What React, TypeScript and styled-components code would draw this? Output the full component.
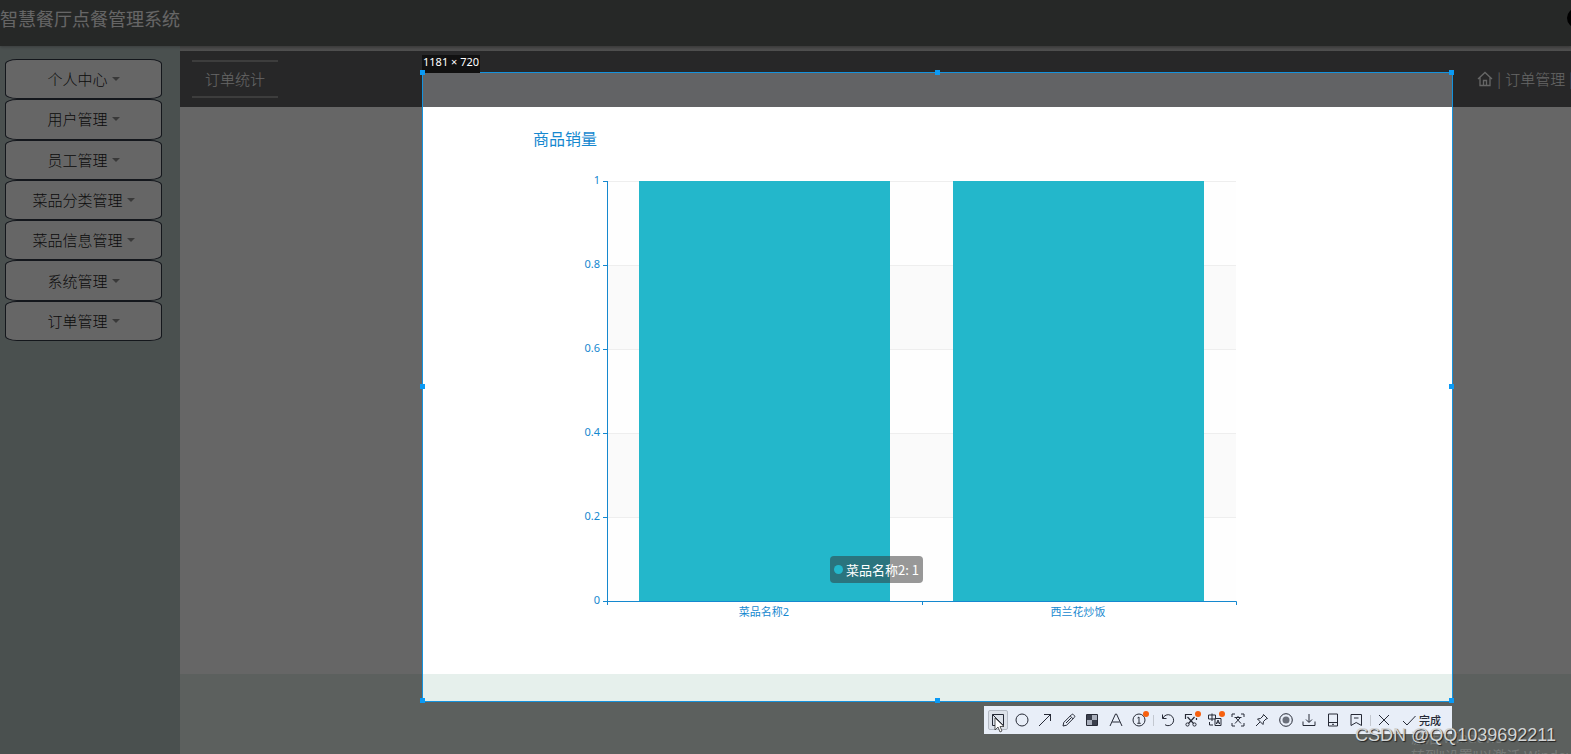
import React from "react";
import styled, { createGlobalStyle } from "styled-components";

const sans = `"Noto Sans", "Noto Sans CJK SC", sans-serif`;
const cjk = `"Noto Sans CJK SC", sans-serif`;
const blue = "#1588cf";

const Global = createGlobalStyle`
  * { box-sizing: border-box; }
  body { margin: 0; overflow: hidden; font-family: ${cjk}; background: #e6f0ec; }
`;

const Screen = styled.div`
  position: relative;
  min-height: 100vh;
  display: flex;
  flex-direction: column;
  overflow: hidden;
`;

const Header = styled.header`
  height: 46px;
  padding-bottom: 10px;
  display: flex;
  align-items: center;
  justify-content: space-between;
  background: #5f6462;
  box-shadow: 0 1px 3px #60646480;
  z-index: 1;
`;

const SystemName = styled.h1`
  margin: 0;
  font-size: 18px;
  line-height: 24px;
  font-weight: 400;
  color: #fff;
`;

const Avatar = styled.span`
  width: 20px;
  height: 20px;
  margin-right: -16px;
  border-radius: 50%;
  background: #000;
`;

const Body = styled.div`
  flex: 1;
  display: flex;
`;

const Sidebar = styled.nav`
  width: 180px;
  flex: none;
  padding: 13px 18px 0 5px;
  background: #b9c8c6;
`;

const Menu = styled.ul`
  margin: 0;
  padding: 0;
  list-style: none;
  height: 282px;
  display: grid;
  grid-auto-rows: 1fr;
`;

const MenuItem = styled.li`
  display: flex;
`;

const MenuButton = styled.button`
  flex: 1;
  padding: 0;
  display: flex;
  align-items: center;
  justify-content: center;
  gap: 4px;
  border: 1px solid #343a48;
  border-radius: 12px / 5px;
  background: #fff;
  font: 300 15px/20px ${cjk};
  color: #222;
`;

const Caret = styled.span`
  border: 4px solid transparent;
  border-top-color: #909090;
  border-bottom: 0;
`;

const Main = styled.main`
  flex: 1;
  min-width: 0;
  padding-top: 5px;
  background: linear-gradient(#b0b0b0, #c8c8c8) 0 0 / 100% 5px no-repeat;
`;

const TitleBar = styled.div`
  height: 56px;
  padding-left: 12px;
  display: flex;
  align-items: center;
  justify-content: space-between;
  background: #626365;
  color: #fff;
  font-size: 15px;
  line-height: 20px;
  font-weight: 300;
  white-space: nowrap;
  overflow: hidden;
`;

const PageTitle = styled.h2`
  margin: 0;
  padding: 7px 13px;
  border: solid #999;
  border-width: 2px 0;
  font-size: 15px;
  line-height: 20px;
  font-weight: 300;
`;

const Crumbs = styled.div`
  display: flex;
  align-items: center;
  gap: 4px;
  margin-right: -2px;
`;

const CrumbLink = styled.a`
  display: flex;
  color: inherit;
  text-decoration: none;
`;

const Content = styled.section`
  height: 567px;
  padding-left: 348px;
  background: #fff;
`;

const ChartBox = styled.div`
  position: relative;
  width: 788px;
`;

const ChartArt = styled.svg`
  display: block;
`;

const Tooltip = styled.div`
  position: absolute;
  left: 302px;
  top: 449px;
  height: 27px;
  padding: 0 4px;
  display: flex;
  align-items: center;
  gap: 3px;
  border-radius: 4px;
  background: rgba(50, 50, 50, 0.5);
  color: #fff;
  font: 400 13px/20px ${cjk};
  white-space: nowrap;
`;

const Dot = styled.span`
  width: 9px;
  height: 9px;
  border-radius: 50%;
  background: #23b7cb;
`;

const Selection = styled.div`
  position: absolute;
  z-index: 2;
  left: 422px;
  right: 118px;
  top: 72px;
  height: 630px;
  border: 1px solid #1592dc;
  box-shadow: 0 0 0 4000px rgba(0, 0, 0, 0.6);
`;

const Handle = styled.i<{ $x: number; $y: number }>`
  position: absolute;
  left: ${(p) => p.$x}%;
  top: ${(p) => p.$y}%;
  width: 5px;
  height: 5px;
  margin: -3px;
  background: #0a9af5;
`;

const SizeLabel = styled.span`
  position: absolute;
  left: -1px;
  bottom: 100%;
  height: 18px;
  padding: 0 1px;
  background: #111;
  color: #fff;
  font: 400 11px/14px ${sans};
  white-space: nowrap;
`;

const Tools = styled.div`
  position: absolute;
  right: 0;
  top: 100%;
  margin-top: 5px;
  width: 468px;
  height: 28px;
  padding: 0 11px 0 4px;
  display: flex;
  align-items: center;
  justify-content: space-between;
  background: #e8eef8;
  color: #262a36;
`;

const Tool = styled.button<{ $active?: boolean }>`
  position: relative;
  width: 20px;
  height: 20px;
  flex: none;
  padding: 0;
  display: grid;
  place-items: center;
  border: 1px solid ${(p) => (p.$active ? "#b4bac4" : "transparent")};
  border-radius: 2px;
  background: ${(p) => (p.$active ? "#dde2ea" : "none")};
  color: inherit;
`;

const Badge = styled.i`
  position: absolute;
  right: -1px;
  top: 0;
  width: 6px;
  height: 6px;
  border-radius: 50%;
  background: #f7600f;
`;

const Divider = styled.span`
  width: 1px;
  height: 11px;
  background: #c3c8d0;
`;

const Done = styled.button`
  padding: 0 0 0 4px;
  border: 0;
  display: flex;
  align-items: center;
  gap: 3px;
  background: none;
  color: inherit;
  font: 500 11px/16px ${cjk};
  white-space: nowrap;
`;

const Cursor = styled.svg`
  position: absolute;
  left: 10px;
  top: 11px;
`;

const Activation = styled.div`
  position: absolute;
  z-index: 3;
  left: calc(100% - 160px);
  top: calc(100% - 25px);
  color: #a0a4a266;
  font: 400 14px/18px ${sans};
  white-space: nowrap;
`;

const Watermark = styled.div`
  position: absolute;
  z-index: 4;
  right: 15px;
  bottom: 8px;
  color: #d2d4d4;
  font: 400 18px/22px "Liberation Sans", Arial, sans-serif;
  text-shadow: 1px 1px 1px #222;
  white-space: nowrap;
`;

const menu = ["个人中心", "用户管理", "员工管理", "菜品分类管理", "菜品信息管理", "系统管理", "订单管理"];

const handles = [
  [0, 0], [50, 0], [100, 0],
  [0, 50], [100, 50],
  [0, 100], [50, 100], [100, 100],
];

const ticks = [
  { label: "1", y: 74 },
  { label: "0.8", y: 158 },
  { label: "0.6", y: 242 },
  { label: "0.4", y: 326 },
  { label: "0.2", y: 410 },
  { label: "0", y: 494 },
];

const bars = [
  { name: "菜品名称2", x: 111, mid: 236 },
  { name: "西兰花炒饭", x: 425, mid: 550 },
];

function Chart() {
  return (
    <ChartArt width="788" height="567" role="img" aria-label="商品销量">
      <text x="5" y="38" fontSize="16" fill={blue} fontFamily={cjk}>商品销量</text>
      {ticks.slice(0, 5).map((t, i) => (
        <rect key={t.y} x="79" y={t.y} width="629" height="84" fill={i % 2 ? "#fafafa" : "#fefefe"} />
      ))}
      {ticks.slice(0, 5).map((t) => (
        <path key={t.y} d={`M79 ${t.y + 0.5}H708`} stroke="#eee" />
      ))}
      {bars.map((b) => (
        <rect key={b.name} x={b.x} y="74" width="251" height="420" fill="#23b7cb" />
      ))}
      <g stroke={blue} fill="none">
        <path d="M79.5 74V498M75 494.5H708.5V498M394.5 494V498" />
        {ticks.map((t) => <path key={t.y} d={`M75 ${t.y + 0.5}h5`} />)}
      </g>
      <g fill={blue} fontFamily={sans} fontSize="11">
        {ticks.map((t) => <text key={t.y} x="72" y={t.y + 3} textAnchor="end">{t.label}</text>)}
        {bars.map((b) => <text key={b.name} x={b.mid} y="509" textAnchor="middle">{b.name}</text>)}
      </g>
    </ChartArt>
  );
}

const icons: { name: string; badge?: boolean; active?: boolean; dividerAfter?: boolean; art: React.ReactNode }[] = [
  { name: "矩形", active: true, art: <path d="M1.500 1.500h11v11h-11zM1.500 1.500l11 11" /> },
  { name: "椭圆", art: <circle cx="7" cy="7" r="6" /> },
  { name: "箭头", art: <path d="M1 13L13 1M6 1.500h6.500V8" /> },
  { name: "画笔", art: <path d="M1 13l.8-3.600L9.500 1.700q1-1 2 0l.8.8q1 1 0 2L4.600 12.200zM8.200 3l2.800 2.800M4 10l5-5" /> },
  { name: "马赛克", art: <><path d="M1.500 1.500h11v11h-11z" /><path d="M7 2h5v5H7zM2 7h5v5H2z" fill="#a8aebb" stroke="none" /><path d="M2 2h5v5H2zM7 7h5v5H7z" fill="#3a3f4c" stroke="none" /></> },
  { name: "文字", art: <path d="M1 13L6.500 1h1L13 13M3.200 9h7.600" /> },
  { name: "序号", badge: true, dividerAfter: true, art: <><circle cx="7" cy="7" r="6" /><path d="M5.500 5L7 4v6M5.300 10.300h3.400" /></> },
  { name: "撤销", art: <path d="M1.500 1.500v4h4M2 5.200A5.500 5.500 0 1 1 4 11.700" /> },
  { name: "截取", badge: true, art: <><path d="M1.500 6V1.500H8M12.500 5v2M3.500 4l6 6.500M10.500 4l-6 6.500" strokeWidth="1.200" /><circle cx="3.500" cy="11.500" r="1.600" /><circle cx="10.500" cy="11.500" r="1.600" /></> },
  { name: "翻译", badge: true, art: <path d="M.5 2h7v4h-7zM4 .5V8M7 5.500h6v7H7zM8.300 11L10 7l1.700 4M8.800 9.800h2.400M1.500 9v3H5" /> },
  { name: "识别", art: <path d="M1 4V1h3M10 1h3v3M13 10v3h-3M4 13H1v-3M3.500 4.500h7M7 3v1.500M9 5l-5 5.500M5 5l5 5.500" /> },
  { name: "钉住", art: <path d="M8.500 1.500l4 4L11 6 8.500 8.500l-.5 3L2.500 6l3-.5L8 3zM5 9l-4 4" /> },
  { name: "录制", art: <><circle cx="7" cy="7" r="6.300" /><circle cx="7" cy="7" r="3.500" fill="#6a6f7a" stroke="none" /></> },
  { name: "保存", art: <path d="M7 1v8M4 6.500l3 3 3-3M1 8.500v4h12v-4" /> },
  { name: "发送到手机", art: <path d="M2.500 1h9v12h-9zM2.500 9.500h9M6 11.300h2" /> },
  { name: "收藏", dividerAfter: true, art: <path d="M2 1.500h10.500v11L7.200 9.500 2 12.500zM5 5h4.500" /> },
  { name: "取消", art: <path d="M2 2l10 10M12 2L2 12" /> },
];

function ToolIcon({ children }: { children: React.ReactNode }) {
  return (
    <svg width="14" height="14" viewBox="0 0 14 14" fill="none" stroke="currentColor" strokeWidth="1">
      {children}
    </svg>
  );
}

export default function App() {
  return (
    <Screen>
      <Global />
      <Header>
        <SystemName>智慧餐厅点餐管理系统</SystemName>
        <Avatar />
      </Header>
      <Body>
        <Sidebar>
          <Menu>
            {menu.map((m) => (
              <MenuItem key={m}>
                <MenuButton>{m}<Caret /></MenuButton>
              </MenuItem>
            ))}
          </Menu>
        </Sidebar>
        <Main>
          <TitleBar>
            <PageTitle>订单统计</PageTitle>
            <Crumbs>
              <CrumbLink href="#" aria-label="首页">
                <svg width="16" height="16" viewBox="0 0 16 16" fill="none" stroke="currentColor" strokeWidth="1.300">
                  <path d="M1 8l7-6.500L15 8M3 6.500v8h10v-8M6.500 14.500v-5h3v5" />
                </svg>
              </CrumbLink>
              <span>|</span>
              <CrumbLink href="#">订单管理</CrumbLink>
              <span>|</span>
            </Crumbs>
          </TitleBar>
          <Content>
            <ChartBox>
              <Chart />
              <Tooltip><Dot />菜品名称2: 1</Tooltip>
            </ChartBox>
          </Content>
        </Main>
      </Body>
      <Selection>
        <SizeLabel>1181 × 720</SizeLabel>
        {handles.map(([x, y]) => <Handle key={`${x}-${y}`} $x={x} $y={y} />)}
        <Tools>
          {icons.map((i) => (
            <React.Fragment key={i.name}>
              <Tool $active={i.active} aria-label={i.name}>
                <ToolIcon>{i.art}</ToolIcon>
                {i.badge && <Badge />}
              </Tool>
              {i.dividerAfter && <Divider />}
            </React.Fragment>
          ))}
          <Done><ToolIcon><path d="M1 8l4 4 8.500-9" /></ToolIcon>完成</Done>
          <Cursor width="12" height="16" viewBox="0 0 12 16">
            <path d="M1 1v12l3-3 2 5 2-1-2-4.500h4z" fill="#fff" stroke="#333" strokeWidth=".8" />
          </Cursor>
        </Tools>
      </Selection>
      <Activation>激活 Windows<br />转到"设置"以激活 Windows。</Activation>
      <Watermark>CSDN @QQ1039692211</Watermark>
    </Screen>
  );
}
